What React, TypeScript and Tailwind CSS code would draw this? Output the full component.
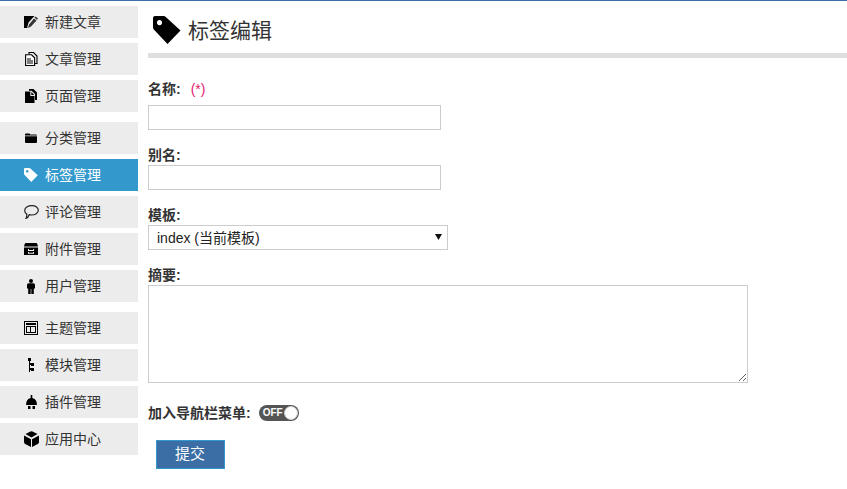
import type { ReactNode } from "react";

const FONT = "font-['Liberation_Sans','Noto_Sans_CJK_SC',sans-serif]";

function NewIcon() {
  return (
    <svg width="14" height="12" viewBox="0 0 14 12" fill="#000">
      <path d="M0 0h10.500L9 1.500 4.500 6.500 3.300 11l.2 1H0z" />
      <path d="M11.500.5 14 2.500 13 3.700 10.500 1.700zM10 2.500l2.500 2-5.500 6-3 1.500 1-3.500z" fill="#333" />
    </svg>
  );
}

function PostsIcon() {
  return (
    <svg width="13" height="14" viewBox="0 0 13 14" fill="none" stroke="#000" strokeWidth="1.100">
      <path d="M4 2.500v-2h4.500l3.500 3.500v7.500h-2" />
      <path d="M.6 2.800h6l3 3v7.700h-9z" fill="#fff" />
      <path d="M2 7h4M2 9h6M2 11h6" />
    </svg>
  );
}

function PagesIcon() {
  return (
    <svg width="12" height="14" viewBox="0 0 12 14" fill="#000">
      <path d="M4 0h4.500L12 3.500V11H10V5L6.500 1.800H4z" />
      <path d="M0 2.500h5.300V7h4.200v7H0z" />
      <path d="M6.300 3 9.300 6H6.300z" />
    </svg>
  );
}

function FolderIcon() {
  return (
    <svg width="12" height="10" viewBox="0 0 12 10" fill="#000">
      <path d="M0 1.500Q0 .5 1 .5h3.500l.8 1H11q1 0 1 1H0zM0 3.200h12V9q0 1-1 1H1q-1 0-1-1z" />
    </svg>
  );
}

function TagIcon({ size, color }: { size: number; color: string }) {
  return (
    <svg width={size} height={size} viewBox="0 0 28 28" fill={color}>
      <path
        fillRule="evenodd"
        d="M2 0h8.500q1.300 0 2.300 1L27.500 14.500 14.500 28 .8 13.500Q0 12.500 0 11V2q0-2 2-2zm4.500 4a2.600 2.600 0 1 0 .01 0z"
      />
    </svg>
  );
}

function CommentIcon() {
  return (
    <svg width="15" height="14" viewBox="0 0 15 14" fill="none" stroke="#222" strokeWidth="1.200">
      <path d="M8 .7c3.700 0 6.300 1.900 6.300 4.500 0 2.800-3 4.800-6.800 4.800-.8 0-1.500-.1-2.300-.3C4.400 11.800 3.300 13 2 13.400c.6-1 .9-2.500.8-4.200C1.400 8.300.7 7 .7 5.500.7 2.800 3.800.7 8 .7z" />
    </svg>
  );
}

function CabinetIcon() {
  return (
    <svg width="14" height="12" viewBox="0 0 14 12" fill="#000">
      <path d="M2 0h10q1 0 1.300 1L14 3.500H0L.7 1Q1 0 2 0z" />
      <path fillRule="evenodd" d="M0 4.500h14V12H0zM4 6v2h6V6H9v1H5V6zm0 3v1.800h6V9H9v.8H5V9z" />
    </svg>
  );
}

function UserIcon() {
  return (
    <svg width="8" height="15" viewBox="0 0 8 15" fill="#000">
      <circle cx="4" cy="2" r="2" />
      <path d="M1.500 4.300h5Q8 4.300 8 6v3.500H6.800V15H4.300V10h-.6v5H1.200V9.500H0V6q0-1.700 1.500-1.700z" />
    </svg>
  );
}

function ThemeIcon() {
  return (
    <svg width="14" height="14" viewBox="0 0 14 14" fill="none" stroke="#000" shapeRendering="crispEdges">
      <path d="M.5.500h13v13H.5z" />
      <path d="M2 3h10" strokeWidth="2" />
      <path d="M2.500 5.500h9v6h-9zM6.500 5.500v6" />
    </svg>
  );
}

function ModuleIcon() {
  return (
    <svg width="6" height="14" viewBox="0 0 6 14" fill="#000" shapeRendering="crispEdges">
      <path d="M0 0h3v3H2v2h1V4.500h3v3H3V7H2v3h1V9.500h3v3H3V12H2v2H1V3H0z" />
    </svg>
  );
}

function PluginIcon() {
  return (
    <svg width="11" height="14" viewBox="0 0 11 14" fill="#000">
      <path d="M4.700 0h1.600v3Q11 4 11 10H0Q0 4 4.700 3z" />
      <path d="M2 11h2.500v3H2zM6.500 11H9v3H6.500z" />
    </svg>
  );
}

function CubeIcon() {
  return (
    <svg width="15" height="16" viewBox="0 0 15 16" fill="#000">
      <path d="M6.500.4Q7.500 0 8.500.4L13.500 3 7.500 6.400 1.500 3zM0 4.500l7 3.800V16l-5.800-3Q0 12.300 0 11zM15 4.500 8 8.300V16l5.800-3q1.200-.7 1.200-2z" />
    </svg>
  );
}

function NavItem({ icon, label, active }: { icon: ReactNode; label: string; active?: boolean }) {
  return (
    <a
      className={
        active
          ? "flex h-8 w-[138px] items-center bg-[#3399cc] text-white"
          : "flex h-8 w-[138px] items-center bg-[#ececec] text-[#333]"
      }
    >
      <span className="flex w-[45px] shrink-0 justify-center pl-[18px] pr-[1px]">{icon}</span>
      <span className="text-sm leading-none">{label}</span>
    </a>
  );
}

function FieldLabel({ children }: { children: ReactNode }) {
  return <label className="block text-sm leading-[20px] font-bold text-[#333]">{children}</label>;
}

export default function App() {
  return (
    <div className={`${FONT} flex min-h-[489px] border-t border-[#3a6ea5] bg-white`}>
      <aside className="flex w-[148px] shrink-0 flex-col gap-[10px] pt-[5px]">
        <nav className="flex flex-col gap-[5px]">
          <NavItem icon={<NewIcon />} label="新建文章" />
          <NavItem icon={<PostsIcon />} label="文章管理" />
          <NavItem icon={<PagesIcon />} label="页面管理" />
        </nav>
        <nav className="flex flex-col gap-[5px]">
          <NavItem icon={<FolderIcon />} label="分类管理" />
          <NavItem icon={<TagIcon size={14} color="#fff" />} label="标签管理" active />
          <NavItem icon={<CommentIcon />} label="评论管理" />
          <NavItem icon={<CabinetIcon />} label="附件管理" />
          <NavItem icon={<UserIcon />} label="用户管理" />
        </nav>
        <nav className="flex flex-col gap-[5px]">
          <NavItem icon={<ThemeIcon />} label="主题管理" />
          <NavItem icon={<ModuleIcon />} label="模块管理" />
          <NavItem icon={<PluginIcon />} label="插件管理" />
          <NavItem icon={<CubeIcon />} label="应用中心" />
        </nav>
      </aside>

      <main className="min-w-0 flex-1">
        <div className="box-content flex h-[52px] items-start gap-[7px] border-b-[5px] border-[#dedede] pt-0 pl-[5px]">
          <span className="mt-[15px] block h-[29px]">
            <TagIcon size={28} color="#000" />
          </span>
          <h1 className="mt-[19px] text-[21px] leading-[22px] font-normal text-[#333]">标签编辑</h1>
        </div>

        <form className="pt-[21px]">
          <div className="flex h-[20px] items-center">
            <FieldLabel>名称:</FieldLabel>
            <span className="ml-[10px] text-sm text-[#e6176f]">(*)</span>
          </div>
          <input type="text" className="mt-[6px] block h-[25px] w-[293px] border border-[#ccc] bg-white" />

          <div className="mt-[15px]">
            <FieldLabel>别名:</FieldLabel>
          </div>
          <input type="text" className="block h-[25px] w-[293px] border border-[#ccc] bg-white" />

          <div className="mt-[15px]">
            <FieldLabel>模板:</FieldLabel>
          </div>
          <div className="relative h-[25px] w-[300px]">
            <select className="block h-[25px] w-[300px] appearance-none border border-[#ccc] bg-white pt-[1px] pl-[8px] text-sm text-[#222]">
              <option>index (当前模板)</option>
            </select>
            <svg className="absolute top-[9px] right-[6px]" width="7" height="6" viewBox="0 0 7 6" fill="#111">
              <path d="M0 0h7L3.500 6z" />
            </svg>
          </div>

          <div className="mt-[15px]">
            <FieldLabel>摘要:</FieldLabel>
          </div>
          <textarea className="block h-[98px] w-[600px] border border-[#ccc] bg-white" />

          <div className="mt-[22px] flex h-[16px] items-center gap-[8px]">
            <FieldLabel>加入导航栏菜单:</FieldLabel>
            <span className="flex h-[16px] w-[40px] items-center justify-between rounded-full bg-[#555] pl-[4px] pr-[1px]">
              <span className="text-[10px] leading-none font-bold text-white">OFF</span>
              <span className="h-[14px] w-[14px] rounded-full border border-[#ccc] bg-white" />
            </span>
          </div>

          <button
            type="button"
            className="mt-[19px] ml-[8px] block h-[29px] w-[69px] border border-[#3399cc] bg-[#3a6ea5] pr-[1px] text-[15px] text-white"
          >
            提交
          </button>
        </form>
      </main>
    </div>
  );
}
